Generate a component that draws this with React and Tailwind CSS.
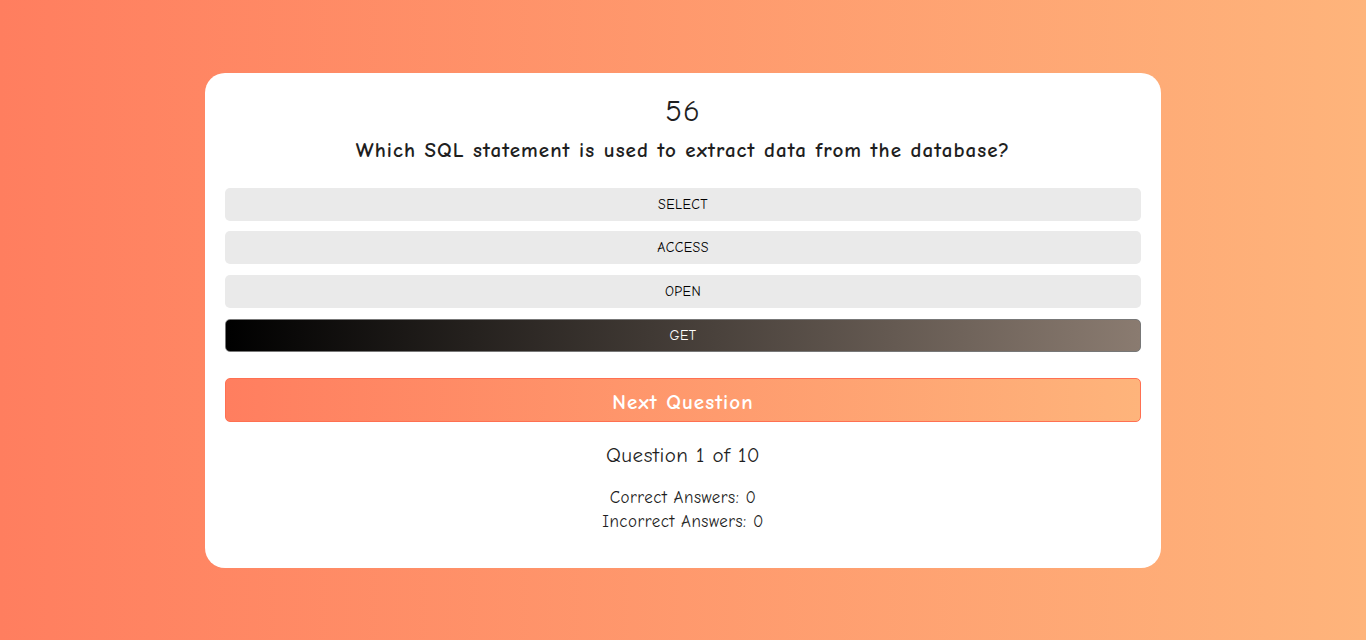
import React from 'react';

const options = ['SELECT', 'ACCESS', 'OPEN', 'GET'];

const App = () => {
  const selected = 'GET';
  return (
    <div
      className="w-full h-[640px] flex items-center justify-center bg-linear-to-r/srgb from-[#ff7e5f] to-[#feb47b] text-[#1f1f1f]"
      style={{ fontFamily: '"Comic Sans MS", "Comic Neue", "DejaVu Sans", sans-serif' }}
    >
      <div className="w-[956px] h-[495px] bg-white rounded-[20px] px-5 pt-[20px] flex flex-col">
        <h1 className="text-[31px] leading-[36px] text-center tracking-[0.03em]">56</h1>
        <h2 className="text-[21px] leading-[28px] font-bold text-center mt-[7px] tracking-[0.05em]">
          Which SQL statement is used to extract data from the database?
        </h2>
        <div className="flex flex-col gap-[10.8px] mt-[24px]">
          {options.map((opt) => (
            <button
              key={opt}
              className={
                opt === selected
                  ? 'h-[33px] rounded-[5px] text-[14px] tracking-[0.03em] text-white bg-linear-to-r/srgb from-black to-[#8a7b70] border border-[#777]'
                  : 'h-[33px] rounded-[5px] text-[14px] tracking-[0.03em] text-black bg-[#eaeaea]'
              }
            >
              {opt}
            </button>
          ))}
        </div>
        <button className="mt-[26px] h-[44px] pt-[4px] rounded-[5px] border border-[#ff7052] bg-linear-to-r/srgb from-[#ff7e5f] to-[#feb47b] text-white text-[21px] leading-[28px] tracking-[0.05em] font-bold">
          Next Question
        </button>
        <p className="text-[21px] leading-[28px] text-center mt-[19px] tracking-[0.025em]">Question 1 of 10</p>
        <div className="text-[17px] leading-[24px] text-center mt-[17px] tracking-[0.03em]">
          <p>Correct Answers: 0</p>
          <p>Incorrect Answers: 0</p>
        </div>
      </div>
    </div>
  );
};

export default App;
